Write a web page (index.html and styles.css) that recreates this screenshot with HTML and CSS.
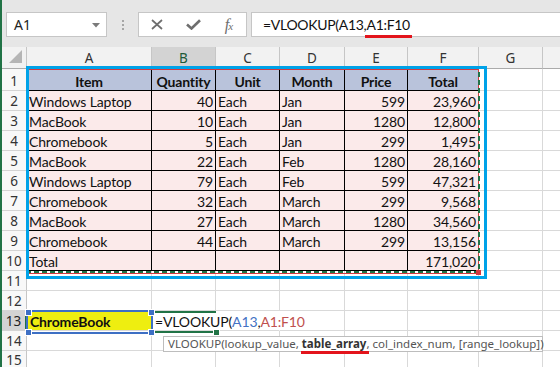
FILE: index.html
```html
<!DOCTYPE html>
<html>
<head>
<meta charset="utf-8">
<link rel="stylesheet" href="styles.css">
</head>
<body>
<div class="app">
  <div class="toolbar">
    <div class="namebox"><span class="nb-text">A1</span><svg class="nb-arrow" width="8" height="5" viewBox="0 0 8 5"><path d="M0 0H8L4 4.5Z" fill="#7a7a7a"/></svg></div>
    <div class="grip"><i></i><i></i><i></i></div>
    <div class="fxbox">
      <span class="ico"><svg width="12" height="11" viewBox="0 0 12 11"><path d="M1 1L11 10M11 1L1 10" stroke="#6e6e6e" stroke-width="1.7" fill="none"/></svg></span>
      <span class="ico"><svg width="15" height="11" viewBox="0 0 15 11"><path d="M1 5.5L5.5 9.5L14 1.2" stroke="#6e6e6e" stroke-width="2.6" fill="none"/></svg></span>
      <span class="ico fx"><i>f<small>x</small></i></span>
    </div>
    <div class="formula">=VLOOKUP(A13,<span class="ul">A1:F10</span></div>
  </div>

  <div class="sheet">
    <div class="corner"><svg width="14" height="14" viewBox="0 0 14 14"><path d="M13 0V13H0Z" fill="#b5b5b5"/></svg></div>
    <div class="ch">A</div><div class="ch act">B</div><div class="ch">C</div><div class="ch">D</div><div class="ch">E</div><div class="ch">F</div><div class="ch">G</div><div class="ch"></div>

    <div class="rh tall">1</div>
    <div class="c t th">Item</div><div class="c t th">Quantity</div><div class="c t th">Unit</div><div class="c t th">Month</div><div class="c t th">Price</div><div class="c t th">Total</div><div class="c"></div><div class="c"></div>

    <div class="rh">2</div>
    <div class="c t">Windows Laptop</div><div class="c t n">40</div><div class="c t">Each</div><div class="c t">Jan</div><div class="c t n">599</div><div class="c t n">23,960</div><div class="c"></div><div class="c"></div>

    <div class="rh">3</div>
    <div class="c t">MacBook</div><div class="c t n">10</div><div class="c t">Each</div><div class="c t">Jan</div><div class="c t n">1280</div><div class="c t n">12,800</div><div class="c"></div><div class="c"></div>

    <div class="rh">4</div>
    <div class="c t">Chromebook</div><div class="c t n">5</div><div class="c t">Each</div><div class="c t">Jan</div><div class="c t n">299</div><div class="c t n">1,495</div><div class="c"></div><div class="c"></div>

    <div class="rh">5</div>
    <div class="c t">MacBook</div><div class="c t n">22</div><div class="c t">Each</div><div class="c t">Feb</div><div class="c t n">1280</div><div class="c t n">28,160</div><div class="c"></div><div class="c"></div>

    <div class="rh">6</div>
    <div class="c t">Windows Laptop</div><div class="c t n">79</div><div class="c t">Each</div><div class="c t">Feb</div><div class="c t n">599</div><div class="c t n">47,321</div><div class="c"></div><div class="c"></div>

    <div class="rh">7</div>
    <div class="c t">Chromebook</div><div class="c t n">32</div><div class="c t">Each</div><div class="c t">March</div><div class="c t n">299</div><div class="c t n">9,568</div><div class="c"></div><div class="c"></div>

    <div class="rh">8</div>
    <div class="c t">MacBook</div><div class="c t n">27</div><div class="c t">Each</div><div class="c t">March</div><div class="c t n">1280</div><div class="c t n">34,560</div><div class="c"></div><div class="c"></div>

    <div class="rh">9</div>
    <div class="c t">Chromebook</div><div class="c t n">44</div><div class="c t">Each</div><div class="c t">March</div><div class="c t n">299</div><div class="c t n">13,156</div><div class="c"></div><div class="c"></div>

    <div class="rh">10</div>
    <div class="c t">Total</div><div class="c t n"></div><div class="c t"></div><div class="c t"></div><div class="c t n"></div><div class="c t n">171,020</div><div class="c"></div><div class="c"></div>

    <div class="rh">11</div>
    <div class="c"></div><div class="c"></div><div class="c"></div><div class="c"></div><div class="c"></div><div class="c"></div><div class="c"></div><div class="c"></div>

    <div class="rh">12</div>
    <div class="c"></div><div class="c"></div><div class="c"></div><div class="c"></div><div class="c"></div><div class="c"></div><div class="c"></div><div class="c"></div>

    <div class="rh act-row">13</div>
    <div class="c yellow">ChromeBook</div><div class="c edit nobr">=VLOOKUP(<span class="ref-blue">A13</span>,<span class="ref-red">A1:F10</span></div><div class="c nobr"></div><div class="c"></div><div class="c"></div><div class="c"></div><div class="c"></div><div class="c"></div>

    <div class="rh">14</div>
    <div class="c"></div><div class="c"></div><div class="c"></div><div class="c"></div><div class="c"></div><div class="c"></div><div class="c"></div><div class="c"></div>

    <div class="rh short">15</div>
    <div class="c"></div><div class="c"></div><div class="c"></div><div class="c"></div><div class="c"></div><div class="c"></div><div class="c"></div><div class="c"></div>

    <!-- overlays -->
    <div class="red-range"></div>
    <svg class="ants" width="454" height="206" viewBox="0 0 454 206"><rect x="1" y="1" width="452" height="204" fill="none" stroke="#217346" stroke-width="2" stroke-dasharray="5 3"/></svg>
    <div class="red-handle"></div>
    <div class="annot"></div>

    <div class="blue-ref">
      <i class="sq tl"></i><i class="sq tr"></i><i class="sq bl"></i><i class="sq br"></i>
    </div>
    <div class="edit-top"></div>
    <div class="edit-bot"></div>
    <div class="fill-handle"></div>

    <div class="tip">VLOOKUP(lookup_value, <b class="tip-ul">table_array</b>, col_index_num, [range_lookup])</div>
  </div>
</div>
</body>
</html>
```

FILE: styles.css
```css
html, body {
  margin: 0;
  padding: 0;
  background: #ffffff;
  overflow: hidden;
}

.app {
  width: 560px;
  height: 367px;
  border-left: 2px solid #217346;
  box-sizing: border-box;
  overflow: hidden;
  font-family: Lato, "Liberation Sans", sans-serif;
}

/* ---------- formula bar ---------- */
.toolbar {
  height: 47px;
  background: #e6e6e6;
  display: flex;
  align-items: flex-start;
  padding-top: 12px;
  box-sizing: border-box;
}

.namebox {
  margin-left: 4px;
  width: 101px;
  height: 25px;
  box-sizing: border-box;
  background: #fff;
  border: 1px solid #c6c6c6;
  display: flex;
  align-items: center;
  justify-content: space-between;
  padding: 0 6px 0 7px;
  font-family: "Noto Sans", "Open Sans", sans-serif;
  font-size: 14px;
  color: #222;
}

.nb-arrow { margin-top: 1px; }

.grip {
  width: 31px;
  height: 25px;
  display: flex;
  flex-direction: column;
  align-items: center;
  justify-content: center;
  gap: 2px;
}
.grip i {
  display: block;
  width: 2px;
  height: 2px;
  background: #a6a6a6;
}

.fxbox {
  width: 109px;
  height: 25px;
  box-sizing: border-box;
  background: #fff;
  border: 1px solid #c6c6c6;
  display: flex;
  align-items: center;
}
.ico {
  width: 36px;
  display: flex;
  justify-content: center;
  align-items: center;
}
.ico:first-child { width: 37px; }
.fx i {
  font-family: "Liberation Serif", serif;
  font-style: italic;
  font-size: 16px;
  color: #6e6e6e;
  letter-spacing: -1px;
}
.fx small { font-size: 11px; }

.formula {
  margin-left: 4px;
  flex: 1;
  height: 25px;
  box-sizing: border-box;
  background: #fff;
  border: 1px solid #c6c6c6;
  border-right: none;
  display: flex;
  align-items: center;
  padding-left: 11px;
  font-size: 14px;
  letter-spacing: -0.3px;
  color: #111;
  white-space: nowrap;
}
.ul { position: relative; }
.ul::after {
  content: "";
  position: absolute;
  left: -1px;
  right: -2px;
  bottom: -5px;
  height: 3px;
  background: #e3141c;
}

/* ---------- sheet grid ---------- */
.sheet {
  position: relative;
  display: grid;
  grid-template-columns: 25px 125px 64px 64px 65px 63px 71px 64px 64px;
  grid-template-rows: 22px 22px repeat(14, 20px);
  font-size: 14px;
  letter-spacing: -0.15px;
  color: #111;
}

.corner, .ch, .rh, .c {
  box-sizing: border-box;
  white-space: nowrap;
}

.corner {
  background: #f2f2f2;
  border-right: 1px solid #c6c6c6;
  border-bottom: 1px solid #ababab;
  display: flex;
  align-items: flex-end;
  justify-content: flex-end;
  padding: 0 3px 4px 0;
}

.ch {
  background: #f2f2f2;
  border-right: 1px solid #c6c6c6;
  border-bottom: 1px solid #ababab;
  display: flex;
  align-items: center;
  justify-content: center;
  font-family: "Noto Sans", "Open Sans", sans-serif;
  font-size: 13.5px;
  letter-spacing: 0;
  color: #333;
  padding-top: 1px;
}
.ch.act {
  background: #d3d3d3;
  color: #1e5b39;
  border-bottom: 2px solid #217346;
}

.rh {
  background: #f8f8f8;
  border-right: 1px solid #c6c6c6;
  border-bottom: 1px solid #d4d4d4;
  display: flex;
  align-items: center;
  justify-content: center;
  font-family: "Noto Sans", "Open Sans", sans-serif;
  font-size: 13.5px;
  letter-spacing: 0;
  color: #333;
  padding-top: 1px;
}
.rh.tall { padding-top: 3px; }
.rh.short { align-items: flex-start; padding-top: 0; }
.rh.act-row {
  background: #d3d3d3;
  border-right: 2px solid #217346;
  color: #222;
}

.c {
  border-right: 1px solid #d9d9d9;
  border-bottom: 1px solid #d9d9d9;
  display: flex;
  align-items: center;
  padding: 1px 2px 0 2px;
  overflow: visible;
}

.t {
  background: #fbeaea;
  border-right-color: #000;
  border-bottom-color: #000;
}
.th {
  background: #b9c3db;
  font-weight: bold;
  justify-content: center;
  padding-top: 3px;
}
.n { justify-content: flex-end; }

.yellow {
  background: #eeee10;
  font-weight: bold;
  padding-left: 3px;
}

.edit {
  position: relative;
  z-index: 2;
  padding-left: 3px;
  color: #111;
}
.nobr { border-right-color: transparent; }
.ref-blue { color: #4472c4; }
.ref-red { color: #c0504d; }

/* ---------- overlays ---------- */
.annot {
  position: absolute;
  left: 24px;
  top: 19px;
  width: 461px;
  height: 213px;
  box-sizing: border-box;
  border: 3px solid #00a2e8;
  z-index: 5;
}

.ants {
  position: absolute;
  left: 24px;
  top: 20px;
  z-index: 4;
}

.red-range {
  position: absolute;
  left: 26px;
  top: 22px;
  width: 451px;
  height: 205px;
  box-sizing: border-box;
  border: 1px solid #d43a40;
  z-index: 3;
}
.red-handle {
  position: absolute;
  left: 474px;
  top: 223px;
  width: 5px;
  height: 5px;
  background: #d43a40;
  z-index: 5;
}

.blue-ref {
  position: absolute;
  left: 24px;
  top: 263px;
  width: 127px;
  height: 24px;
  box-sizing: border-box;
  border: 2px solid #3d6fc4;
  z-index: 3;
}
.sq {
  position: absolute;
  width: 5px;
  height: 5px;
  background: #3d6fc4;
  box-shadow: 0 0 0 1px #fff;
}
.sq.tl { left: -2px; top: -2px; }
.sq.tr { right: -3px; top: -2px; }
.sq.bl { left: -2px; bottom: -3px; }
.sq.br { right: -3px; bottom: -3px; }

.edit-top, .edit-bot {
  position: absolute;
  left: 153px;
  width: 61px;
  height: 2px;
  background: #217346;
  z-index: 3;
}
.edit-top { top: 264px; }
.edit-bot { top: 284px; }
.fill-handle {
  position: absolute;
  left: 212px;
  top: 283px;
  width: 5px;
  height: 5px;
  background: #217346;
  box-shadow: 0 0 0 1px #fff;
  z-index: 4;
}

.tip {
  position: absolute;
  left: 161px;
  top: 289px;
  width: 380px;
  height: 16px;
  box-sizing: border-box;
  background: #fff;
  border: 1px solid #bdbdbd;
  font-family: "Noto Sans", "Open Sans", sans-serif;
  font-size: 11.5px;
  line-height: 14px;
  letter-spacing: 0;
  color: #555;
  padding-left: 4px;
  white-space: nowrap;
  z-index: 6;
}
.tip b {
  color: #333;
  position: relative;
}
.tip-ul::after {
  content: "";
  position: absolute;
  left: -1px;
  right: -3px;
  bottom: -3px;
  height: 3px;
  background: #e3141c;
}
```
